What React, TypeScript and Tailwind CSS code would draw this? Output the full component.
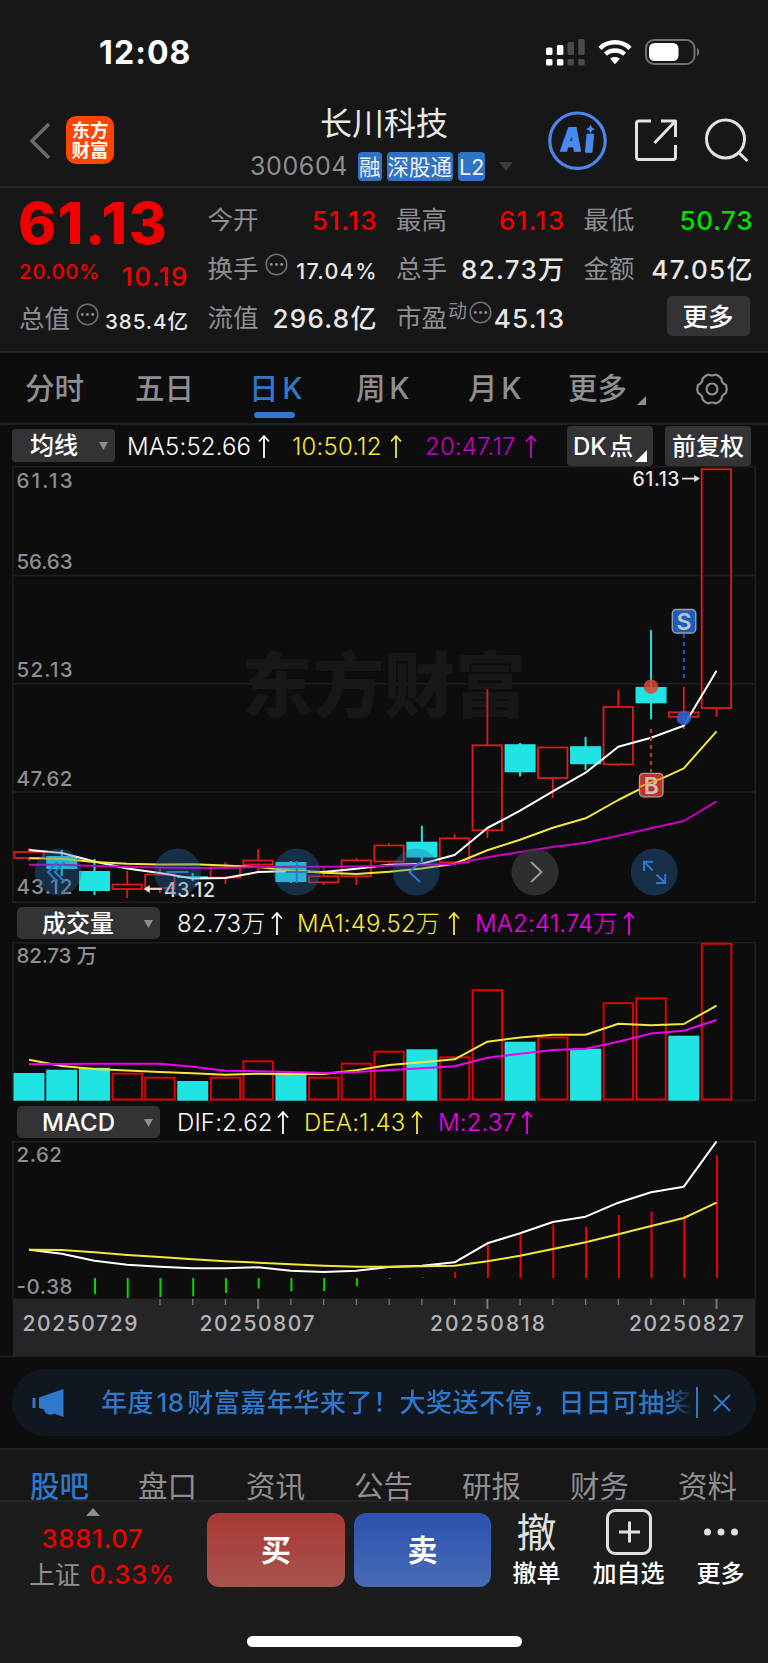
import type { ReactNode } from 'react';

type Candle = { up: boolean; high: number; low: number; top: number; bottom: number };

const STEP = 32.74;
const xAt = (i: number) => 29 + i * STEP;

const c = (up: boolean, high: number, top: number, bottom: number, low: number): Candle => ({ up, high, top, bottom, low });

const candles: Candle[] = [
  c(true, 848, 852, 858, 861),
  c(false, 850, 856, 869, 876),
  c(false, 859, 871, 891, 895),
  c(true, 871, 884.5, 889, 898),
  c(true, 868, 874.5, 888, 893),
  c(false, 873, 876.3, 878, 881),
  c(true, 862, 867.5, 877.5, 884),
  c(true, 849, 860.5, 864.5, 873),
  c(false, 861, 862, 882, 883),
  c(true, 868, 876.3, 882.3, 885),
  c(true, 858, 860.3, 876.3, 885),
  c(true, 843, 845.5, 861.5, 863),
  c(false, 825.7, 841.7, 857.5, 862),
  c(true, 834, 838.3, 862.3, 863),
  c(true, 689.3, 745.3, 830.3, 838),
  c(false, 743, 744.2, 772.3, 776.3),
  c(true, 747, 747.5, 778, 798),
  c(false, 737, 746.2, 764.2, 770),
  c(true, 689.7, 707, 764.3, 765.7),
  c(false, 630, 687, 703.3, 719.3),
  c(true, 687, 712.3, 716.8, 729.3),
  c(true, 469, 469.3, 708, 716.7),
];

const ma5 = [850, 853, 861.5, 868.5, 873, 878.5, 878, 872, 871, 872, 868.7, 864.7, 863.7, 855, 828, 810.7, 791.3, 772.7, 746.7, 737.7, 725.7, 670.7];
const ma10 = [858.3, 858.7, 862, 863.7, 864.5, 864.3, 865.5, 867, 870.5, 872.7, 874, 871.8, 868.5, 863.7, 850.3, 839.7, 827.7, 818.3, 800, 783.3, 768.3, 731.3];
const ma20 = [864.7, 864.7, 866, 866.7, 867.5, 868, 868, 867, 866.7, 866.7, 866.5, 865.7, 864.7, 864, 857.3, 852, 847, 842.7, 835.7, 828.3, 821, 801.3];

const volumes = [1073, 1069.7, 1067.7, 1073.7, 1077.7, 1081, 1077.7, 1061.3, 1074, 1077.7, 1063.7, 1051.7, 1049.3, 1057.3, 990.2, 1041.7, 1037.5, 1048.7, 1003.2, 998.3, 1035.7, 943.7];
const volDown = [0, 1, 2, 5, 8, 12, 15, 17, 20];
const volMa1 = [1059.7, 1066, 1069, 1070.5, 1072, 1073.3, 1074.7, 1073.7, 1074, 1074, 1070.3, 1065, 1062.3, 1059.3, 1041.7, 1037.5, 1034.7, 1034.7, 1023.7, 1025.3, 1024, 1005.7];
const volMa2 = [1064.3, 1064, 1063.7, 1063.7, 1063.7, 1066.7, 1070.7, 1071.3, 1072, 1073, 1072, 1070, 1068.3, 1066.3, 1057.7, 1053.7, 1050, 1048.7, 1041.7, 1033.5, 1030.7, 1020];

const dif = [1249.7, 1253.7, 1260.7, 1264.7, 1266.7, 1268.3, 1268.3, 1267.3, 1270.7, 1272, 1270.7, 1267, 1265.7, 1262.3, 1243.3, 1233.3, 1222, 1216.7, 1202.7, 1192.3, 1186.7, 1141.3];
const dea = [1249.7, 1250, 1252.3, 1255, 1257, 1259.3, 1261.3, 1262.7, 1264.3, 1265.7, 1266.7, 1266.8, 1266.3, 1265.7, 1261.3, 1255.7, 1249, 1242.3, 1234.3, 1226, 1218, 1202.7];
const macd = [1278, 1281, 1294, 1298, 1297, 1296.3, 1293, 1288.3, 1291.3, 1291, 1286, 1278.6, 1277, 1271.7, 1244.3, 1234.3, 1224.7, 1226.7, 1215.3, 1211.3, 1215.7, 1155];

const points = (ys: number[]) => ys.map((y, i) => `${xAt(i)},${y}`).join(' ');

function Line({ ys, color }: { ys: number[]; color: string }) {
  return <polyline points={points(ys)} fill="none" stroke={color} strokeWidth="2" strokeLinejoin="round" />;
}

function StatusBar() {
  return (
    <div className="flex h-[104px] items-center justify-between pl-[99px] pr-[67px]">
      <span className="pt-[2px] text-[32px] font-bold leading-none tracking-[1.1px]">12:08</span>
      <div className="flex items-center gap-[12px]">
        <svg width="41" height="27" viewBox="0 0 41 27">
          <g fill="#fff">
            <rect x="0" y="8.500" width="6.5" height="7.5" rx="1.5" />
            <rect x="10.9" y="6" width="6.5" height="10" rx="1.5" />
            <rect x="0" y="20" width="6.5" height="6.5" rx="1.5" />
            <rect x="10.9" y="20" width="6.5" height="6.5" rx="1.5" />
          </g>
          <g fill="#4a4a4a">
            <rect x="21.500" y="3" width="6.5" height="13" rx="1.5" />
            <rect x="32.200" y="0" width="6.5" height="16" rx="1.5" />
            <rect x="21.500" y="20" width="6.5" height="6.5" rx="1.5" />
            <rect x="32.200" y="20" width="6.5" height="6.5" rx="1.5" />
          </g>
        </svg>
        <svg className="-ml-[1px] mr-[1px]" width="34" height="26" viewBox="0 0 35 26" fill="none" stroke="#fff" strokeWidth="4.600">
          <path d="M2 9.300C10.500 1 24.500 1 33 9.300" />
          <path d="M7.600 15.300C13 10.300 22 10.300 27.400 15.300" />
          <path d="M17.500 25.500L12.500 20C15 17.400 20 17.400 22.500 20Z" fill="#fff" stroke="none" />
        </svg>
        <svg width="56" height="26" viewBox="0 0 56 26">
          <rect x="1" y="1" width="48.500" height="24" rx="8" fill="none" stroke="#727272" strokeWidth="2" />
          <rect x="4" y="4" width="29.500" height="18" rx="5.500" fill="#fff" />
          <path d="M52 9c3 1 3 7 0 8z" fill="#727272" />
        </svg>
      </div>
    </div>
  );
}

function Tag({ children }: { children: ReactNode }) {
  return <span className="flex h-[29px] items-center whitespace-nowrap rounded-[4px] bg-[#2f73c4] px-[1px] pt-[1px] text-[21.500px] text-[#f0f0f0]">{children}</span>;
}

function Header() {
  return (
    <div className="grid h-[84px] grid-cols-[1fr_270px_1fr] border-b-2 border-[#262628]">
      <div className="flex items-start pl-[29px] pt-[12px]">
        <svg width="22" height="48" viewBox="0 0 22 48" fill="none" stroke="#6a6a6c" strokeWidth="3.500">
          <path d="M20 8L3 25L20 42" />
        </svg>
        <div className="ml-[15px] flex h-[48px] w-[48px] flex-col items-center justify-center rounded-[10px] bg-[#ff4500] text-[18.500px] font-bold leading-[20px]">
          <span>东方</span>
          <span>财富</span>
        </div>
      </div>
      <div className="flex flex-col items-center">
        <h1 className="text-[32px] leading-[40px] text-[#e8e8e8]">长川科技</h1>
        <div className="mt-[8px] flex items-center gap-[5px] self-start pl-[1px]">
          <span className="mr-[5px] text-[25px] leading-none tracking-[0.600px] text-[#8e8e93]">300604</span>
          <Tag>融</Tag>
          <Tag>深股通</Tag>
          <Tag>L2</Tag>
          <svg className="ml-[9px]" width="14" height="9" viewBox="0 0 14 9">
            <path d="M0 0H14L7 9Z" fill="#3c3c3e" />
          </svg>
        </div>
      </div>
      <div className="flex items-start justify-end pr-[19px] pt-[6px]">
        <svg width="60" height="60" viewBox="0 0 60 60">
          <circle cx="29.500" cy="30.700" r="27.700" fill="none" stroke="#4a86ee" strokeWidth="3.200" />
          <g fill="#4a8af0" stroke="#4a8af0" strokeWidth="1.500" strokeLinejoin="round" fontSize="32" fontWeight="900" transform="skewX(-5)">
            <text x="15.500" y="41" textLength="21" lengthAdjust="spacingAndGlyphs">A</text>
            <text x="40" y="42.500" textLength="9" lengthAdjust="spacingAndGlyphs">ı</text>
          </g>
          <path d="M42.500 14.500L44 17.500L47 19L44 20.500L42.500 23.500L41 20.500L38 19L41 17.500Z" fill="#4a8af0" />
        </svg>
        <svg className="ml-[26px] mt-[8px]" width="44" height="44" viewBox="0 0 44 44" fill="none" stroke="#e2e2e2" strokeWidth="3" strokeLinejoin="round">
          <path d="M17 3H5Q2.500 3 2.500 5.500V39Q2.500 41.500 5 41.500H39Q41.500 41.500 41.500 39V27" />
          <path d="M27 3H41.500V19M41.500 3L20.500 25" />
        </svg>
        <svg className="ml-[26px] mt-[8px]" width="45" height="46" viewBox="0 0 45 46" fill="none" stroke="#e2e2e2" strokeWidth="3">
          <circle cx="21.500" cy="21" r="19" />
          <path d="M34.500 34.500L43.500 43" />
        </svg>
      </div>
    </div>
  );
}

function Dots() {
  return (
    <svg className="shrink-0" width="23" height="23" viewBox="0 0 23 23">
      <circle cx="11.500" cy="11.500" r="10.300" fill="none" stroke="#6e6e72" strokeWidth="1.600" />
      <g fill="#8e8e93">
        <circle cx="6.300" cy="11.500" r="1.400" />
        <circle cx="11.500" cy="11.500" r="1.400" />
        <circle cx="16.700" cy="11.500" r="1.400" />
      </g>
    </svg>
  );
}

function Stat({ label, mark, value, tone = 'text-[#e8e8e8]', size = 'text-[26px] tracking-[1.300px] -mr-[1.300px]' }: { label: string; mark?: ReactNode; value: string; tone?: string; size?: string }) {
  return (
    <div className="flex h-[49px] items-center justify-between whitespace-nowrap">
      <div className="flex items-center text-[25.500px] text-[#8e8e93]">
        {label}
        {mark}
      </div>
      <span className={`${size} ${tone} font-medium`}>{value}</span>
    </div>
  );
}

function Quote() {
  return (
    <div className="grid h-[165px] grid-cols-[169px_169px_168px_169px] gap-x-[19.500px] border-b-2 border-[#262628] pl-[19px] pt-[8px]">
      <div>
        <div className="-ml-[1px] flex h-[54px] items-center text-[58px] font-extrabold leading-none tracking-[1.500px] text-[#f00000]">61.13</div>
        <div className="flex h-[44px] items-center justify-between font-medium text-[#f00000]">
          <span className="text-[20.500px] tracking-[0.500px]">20.00%</span>
          <span className="-mr-[1px] pt-[8px] text-[26px] tracking-[1.500px]">10.19</span>
        </div>
        <div className="flex h-[50px] items-center justify-between">
          <div className="flex items-center gap-[6px] text-[25.500px] text-[#8e8e93]">
            总值
            <span className="mb-[10px]"><Dots /></span>
          </div>
          <span className="-mr-[1px] pt-[6px] text-[20.500px] font-medium tracking-[1px] text-[#e8e8e8]">385.4亿</span>
        </div>
      </div>
      <div>
        <Stat label="今开" value="51.13" tone="text-[#f00000]" />
        <Stat label="换手" mark={<span className="mb-[10px] ml-[6px]"><Dots /></span>} value="17.04%" size="pt-[4px] text-[21.500px] tracking-[1.300px] -mr-[1.300px]" />
        <Stat label="流值" value="296.8亿" />
      </div>
      <div>
        <Stat label="最高" value="61.13" tone="text-[#f00000]" />
        <Stat label="总手" value="82.73万" />
        <Stat
          label="市盈"
          mark={
            <span className="mb-[12px] ml-[1px] flex items-center gap-[2px] text-[19px]">
              动<Dots />
            </span>
          }
          value="45.13"
        />
      </div>
      <div>
        <Stat label="最低" value="50.73" tone="text-[#00e000]" size="text-[26px] tracking-[0.700px] -mr-[0.700px]" />
        <Stat label="金额" value="47.05亿" />
        <div className="flex h-[44px] items-center justify-end pr-[3px]">
          <button className="h-[40px] w-[83px] rounded-[5px] bg-[#333335] pt-[1px] text-[25.500px] font-medium leading-none">更多</button>
        </div>
      </div>
    </div>
  );
}

function PeriodTabs() {
  return (
    <div className="flex h-[72px] items-center border-b-2 border-[#1f1f21] pt-[2px] text-[29.500px] font-medium leading-none text-[#8e8e93] [word-spacing:-4px]">
      <span className="ml-[25px] w-[110px]">分时</span>
      <span className="w-[114px]">五日</span>
      <span className="relative w-[107px] text-[#2f78cc]">
        日 K
        <i className="absolute left-[5px] top-[38px] h-[6px] w-[41px] rounded-full bg-[#2f78cc]" />
      </span>
      <span className="w-[112px]">周 K</span>
      <span className="w-[100px]">月 K</span>
      <span>更多</span>
      <svg className="ml-[10px] mt-[22px]" width="9" height="9" viewBox="0 0 9 9">
        <path d="M9 0V9H0Z" fill="#8e8e93" />
      </svg>
      <svg className="ml-[49px]" width="34" height="34" viewBox="0 0 34 34" fill="none" stroke="#8e8e93" strokeWidth="2.200" strokeLinejoin="round">
        <path d="M13.500 2.500Q17 4.500 20.500 2.500Q25 4 26.500 7Q26.500 11 31 13Q32.500 17 31 21Q26.500 23 26.500 27Q25 30 20.500 31.500Q17 29.500 13.500 31.500Q9 30 7.500 27Q7.500 23 3 21Q1.500 17 3 13Q7.500 11 7.500 7Q9 4 13.500 2.500Z" />
        <circle cx="17" cy="17" r="5.500" />
      </svg>
    </div>
  );
}

function Indicator({ text, tone, width }: { text: string; tone: string; width: string }) {
  return (
    <span className={`flex shrink-0 items-center justify-between whitespace-nowrap pt-[2px] text-[24px] font-light leading-none tracking-[0.150px] ${tone} ${width}`}>
      {text}
      <svg className="-mt-[2px]" width="12" height="24" viewBox="0 0 12 24" fill="none" stroke="currentColor" strokeWidth="1.800">
        <path d="M6 24V2M1 7.500L6 2L11 7.500" />
      </svg>
    </span>
  );
}

function Caret() {
  return (
    <svg width="9" height="8" viewBox="0 0 9 8">
      <path d="M0 0H9L4.500 8Z" fill="#8e8e93" />
    </svg>
  );
}

function MaRow() {
  return (
    <div className="flex h-[41px] items-center pl-[12px]">
      <button className="flex h-[33px] w-[103px] items-center justify-between rounded-[4px] bg-[#333335] pl-[18px] pr-[7px] pt-[1px] text-[24px] font-medium leading-none">
        均线
        <Caret />
      </button>
      <span className="w-[12px]" />
      <Indicator text="MA5:52.66" tone="text-white" width="w-[143px]" />
      <span className="w-[22px]" />
      <Indicator text="10:50.12" tone="text-[#f5e63c]" width="w-[110px]" />
      <span className="w-[23px]" />
      <Indicator text="20:47.17" tone="text-[#c800c8]" width="w-[112px]" />
      <button className="relative ml-[30px] h-[40px] w-[86px] rounded-[4px] bg-[#333335] pl-[6px] pt-[2px] text-left text-[24px] font-medium leading-none [word-spacing:-4px]">
        DK 点
        <svg className="absolute bottom-[4px] right-[6px]" width="12" height="12" viewBox="0 0 12 12">
          <path d="M12 0V12H0Z" fill="#fff" />
        </svg>
      </button>
      <button className="ml-[12px] h-[40px] w-[86px] rounded-[4px] bg-[#333335] pt-[2px] text-[24px] font-medium leading-none">前复权</button>
    </div>
  );
}

const gridLabels: [string, number][] = [
  ['61.13', 488],
  ['56.63', 569],
  ['52.13', 677],
  ['47.62', 786],
  ['43.12', 894],
];

function RoundButton({ cx, muted, children }: { cx: number; muted?: boolean; children: ReactNode }) {
  return (
    <g fill="none" stroke={muted ? '#9a9a9e' : '#2f78d0'} strokeWidth="2">
      <circle cx={cx} cy="872" r="23.500" fill={muted ? '#3a3a3c' : '#2a69b0'} fillOpacity={muted ? 0.75 : 0.36} stroke="none" />
      {children}
    </g>
  );
}

function PriceChart() {
  return (
    <svg className="block" width="768" height="437" viewBox="0 466 768 437">
      <g stroke="#1f1f21" strokeWidth="1.500">
        <path d="M12.800 466.700H755.300V902.300H12.800Z" fill="none" />
        <path d="M12.800 575.700H755.300M12.800 683.700H755.300M12.800 792H755.300" />
      </g>
      <text x="242" y="711" fontSize="71" fontWeight="900" fill="#171717">东方财富</text>
      {gridLabels.map(([label, y]) => (
        <text key={label} x="16.500" y={y} fontSize="20.500" fontWeight="500" fill="#8e8e93" textLength="56">{label}</text>
      ))}
      {candles.map((k, i) =>
        k.up ? (
          <g key={i} stroke="#e01a1a" strokeWidth="1.800" fill="none">
            <path d={`M${xAt(i)} ${k.high}V${k.top}M${xAt(i)} ${k.bottom}V${k.low}`} />
            <rect x={xAt(i) - 14.8} y={k.top} width="29.400" height={k.bottom - k.top} />
          </g>
        ) : (
          <g key={i} fill="#20e3e3">
            <rect x={xAt(i) - 1} y={k.high} width="2" height={k.low - k.high} />
            <rect x={xAt(i) - 15.5} y={k.top} width="31" height={k.bottom - k.top} />
          </g>
        ),
      )}
      <Line ys={ma5} color="#ffffff" />
      <Line ys={ma10} color="#f5e63c" />
      <Line ys={ma20} color="#c800c8" />

      <path d="M683.800 634V680" stroke="#1f5fc4" strokeWidth="2" strokeDasharray="4 4" />
      <path d="M651 729V772" stroke="#c0392b" strokeWidth="2" strokeDasharray="4 4" />
      <circle cx="651" cy="686.700" r="7.200" fill="#d9452f" fillOpacity="0.850" />
      <circle cx="683.800" cy="718" r="7.200" fill="#2b63d0" fillOpacity="0.900" />
      <rect x="672.300" y="609.500" width="23.500" height="23.500" rx="4" fill="#1a5cc0" stroke="#a0a0a4" strokeWidth="1.300" />
      <rect x="639.500" y="773.300" width="23.500" height="23.500" rx="4" fill="#c03325" stroke="#b0a0a0" strokeWidth="1.300" />
      <g fontSize="23" fontWeight="600" textAnchor="middle" fill="#c4c4c6">
        <text x="684" y="629.700">S</text>
        <text x="651.300" y="793.500">B</text>
      </g>
      <path d="M639.500 786.900L663 777.800" stroke="#f5a63c" strokeWidth="1.800" />

      <g fill="#e4e4e4" fontSize="19.500" fontWeight="500">
        <text x="632.500" y="485.700" textLength="47">61.13</text>
        <text x="164" y="897" textLength="51">43.12</text>
      </g>
      <g stroke="#e4e4e4" strokeWidth="1.800" fill="#e4e4e4">
        <path d="M682 478.600H696" />
        <path d="M694.500 475.500L699.500 478.600L694.500 481.700Z" strokeWidth="0.500" />
        <path d="M162 889H148" />
        <path d="M149.500 885.500L144 889L149.500 892.500Z" strokeWidth="0.500" />
      </g>

      <RoundButton cx={58.3}>
        <path d="M57.500 862L48 872L57.500 882M64.500 862L55 872L64.500 882" />
      </RoundButton>
      <RoundButton cx={177.5}>
        <path d="M166.300 872H188.500" />
      </RoundButton>
      <RoundButton cx={296.8}>
        <path d="M285.700 872H307.900M296.800 861V883" />
      </RoundButton>
      <RoundButton cx={416.2}>
        <path d="M420 862L409.500 872L420 882" />
      </RoundButton>
      <RoundButton cx={535} muted>
        <path d="M531 862L541.500 872L531 882" />
      </RoundButton>
      <RoundButton cx={654.3}>
        <path d="M653 861.800H644V871M644 861.800L652.500 870.300M656 883H665.200V874M665.200 883L656.500 874.500" />
      </RoundButton>
    </svg>
  );
}

function SubRow({ name, children }: { name: string; children: ReactNode }) {
  return (
    <div className="flex h-[39px] items-center pl-[17px]">
      <button className="mr-[17px] flex h-[32px] w-[143px] shrink-0 items-center justify-between rounded-[5px] bg-[#333335] pl-[25px] pr-[7px] pt-[2px] text-[24px] font-medium leading-none">
        {name}
        <Caret />
      </button>
      {children}
    </div>
  );
}

function VolumeChart() {
  return (
    <svg className="block" width="768" height="160" viewBox="0 942 768 160">
      <path d="M12.800 942.700H755.300V1100.500H12.800Z" fill="none" stroke="#1f1f21" strokeWidth="1.500" />
      <text x="16.500" y="962.500" fontSize="20.500" fontWeight="500" fill="#8e8e93" textLength="80.500">82.73 万</text>
      {volumes.map((y, i) =>
        volDown.includes(i) ? (
          <rect key={i} x={xAt(i) - 15.5} y={y} width="31" height={1100.7 - y} fill="#20e3e3" />
        ) : (
          <rect key={i} x={xAt(i) - 14.7} y={y} width="29.400" height={1099.5 - y} fill="none" stroke="#e80000" strokeWidth="1.900" />
        ),
      )}
      <Line ys={volMa1} color="#f5e63c" />
      <Line ys={volMa2} color="#f000f0" />
    </svg>
  );
}

const dates: [string, number][] = [
  ['20250729', 22.5],
  ['20250807', 199.5],
  ['20250818', 430],
  ['20250827', 629],
];

function MacdChart() {
  return (
    <svg className="block" width="768" height="216" viewBox="0 1141 768 216">
      <path d="M12.800 1141.700H755.300V1299H12.800Z" fill="none" stroke="#1f1f21" strokeWidth="1.500" />
      {macd.map((y, i) => (
        <path key={i} d={`M${xAt(i) + 0.5} 1278V${y}`} stroke={y > 1278 ? '#00d800' : '#f00000'} strokeWidth="2" />
      ))}
      <text x="16.500" y="1161.500" fontSize="20.500" fontWeight="500" fill="#8e8e93" textLength="45.500">2.62</text>
      <text x="16.500" y="1294.300" fontSize="20.500" fontWeight="500" fill="#8e8e93" textLength="56">-0.38</text>
      <Line ys={dif} color="#ffffff" />
      <Line ys={dea} color="#f5e63c" />
      <rect x="13" y="1299" width="742.500" height="57" fill="#252527" />
      {candles.map((_, i) =>
        i < 4 ? null : <path key={i} d={`M${xAt(i)} 1299V${i % 7 === 0 ? 1309 : 1305}`} stroke="#77777a" strokeWidth={i % 7 === 0 ? 2 : 1.3} />,
      )}
      {dates.map(([d, x]) => (
        <text key={d} x={x} y="1330.700" fontSize="21" fontWeight="500" fill="#b4b4b8" textLength="115">{d}</text>
      ))}
      <path d="M0 1356.300H768" stroke="#1f1f21" strokeWidth="1.500" />
    </svg>
  );
}

function Notice() {
  return (
    <div className="flex h-[91px] items-center px-[12px]">
      <div className="flex h-[67px] w-full items-center rounded-full bg-[#10171f] pl-[20px] text-[#2f78cc]">
        <svg width="33" height="28" viewBox="0 0 33 28" fill="currentColor">
          <path d="M0.500 9H3.500V19H0.500ZM7 8.500L31.500 0V28L22 24.500Q19 27 14.500 24.500Q12 23 12 20.500L7 19Z" />
        </svg>
        <div className="ml-[36px] w-[592px] whitespace-nowrap bg-linear-to-r from-[#2f78cc] from-96% to-[#10171f] bg-clip-text text-[26px] font-medium tracking-[0.530px] text-transparent [word-spacing:-5px]">
          年度 18 财富嘉年华来了！大奖送不停，日日可抽奖
        </div>
        <span className="ml-[3px] h-[31px] w-[2px] bg-[#2f78cc]" />
        <svg className="ml-[15px]" width="18" height="18" viewBox="0 0 18 18" stroke="currentColor" strokeWidth="2">
          <path d="M1 1L17 17M17 1L1 17" />
        </svg>
      </div>
    </div>
  );
}

const sections = ['股吧', '盘口', '资讯', '公告', '研报', '财务', '资料'];

function SectionTabs() {
  return (
    <div className="flex h-[52px] items-end justify-between border-t-2 border-[#1f1f21] bg-[#171717] pl-[30px] pr-[31px] text-[29.500px] leading-[28px] text-[#8e8e93]">
      {sections.map((s, i) => (
        <span key={s} className={i === 0 ? 'font-medium text-[#2f78cc]' : ''}>{s}</span>
      ))}
    </div>
  );
}

function BottomBar() {
  return (
    <div className="h-[163px] border-t-2 border-[#262628] bg-[#1c1c1c]">
      <div className="flex h-[89px]">
        <div className="flex w-[207px] flex-col items-center pr-[22px] pt-[6px]">
          <svg className="shrink-0" width="14" height="8" viewBox="0 0 14 8">
            <path d="M7 0L14 8H0Z" fill="#8e8e93" />
          </svg>
          <span className="mt-[6px] text-[25.500px] font-medium leading-[34px] tracking-[0.800px] text-[#f00000]">3881.07</span>
          <span className="mt-[2px] flex gap-[9px] whitespace-nowrap pl-[19px] text-[25.500px] leading-[34px] text-[#8e8e93]">
            上证 <span className="font-medium tracking-[1.100px] text-[#f00000]">0.33%</span>
          </span>
        </div>
        <button className="mt-[11px] h-[74px] w-[138px] rounded-[12px] bg-linear-to-b from-[#a83833] to-[#a8534e] text-[30px] font-bold">买</button>
        <button className="ml-[9px] mt-[11px] h-[74px] w-[137px] rounded-[12px] bg-linear-to-b from-[#2a52ae] to-[#4a6bb6] text-[30px] font-bold">卖</button>
        <div className="flex w-[91px] flex-col items-center">
          <span className="mt-[8px] h-[47px] text-[40px] leading-[45px] text-[#e0e0e0]">撤</span>
          <span className="text-[24px] font-medium leading-[34px]">撤单</span>
        </div>
        <div className="flex w-[93px] flex-col items-center">
          <svg className="mb-[8px] mt-[7px] block shrink-0" width="46" height="46" viewBox="0 0 46 46" fill="none" stroke="#e0e0e0" strokeWidth="3">
            <rect x="1.500" y="1.500" width="43" height="43" rx="7.500" />
            <path d="M13 23H34M23.500 12.500V33.500" />
          </svg>
          <span className="-mt-[6px] text-[24px] font-medium leading-[34px]">加自选</span>
        </div>
        <div className="flex w-[91px] flex-col items-center">
          <svg className="mb-[21px] mt-[26px] shrink-0" width="36" height="8" viewBox="0 0 36 8" fill="#e0e0e0">
            <circle cx="4.500" cy="4" r="3.500" />
            <circle cx="18" cy="4" r="3.500" />
            <circle cx="31.500" cy="4" r="3.500" />
          </svg>
          <span className="text-[24px] font-medium leading-[34px]">更多</span>
        </div>
      </div>
      <div className="mx-auto mt-[45px] h-[11px] w-[275px] rounded-full bg-white" />
    </div>
  );
}

export default function App() {
  return (
    <div className="h-[1663px] w-[768px] overflow-hidden bg-[#0d0d0d] font-[Inter,'Noto_Sans_CJK_SC',sans-serif] text-white">
      <div className="bg-[#171717]">
        <StatusBar />
        <Header />
        <Quote />
      </div>
      <PeriodTabs />
      <MaRow />
      <PriceChart />
      <SubRow name="成交量">
        <Indicator text="82.73万" tone="text-white" width="w-[106px]" />
        <span className="w-[14px]" />
        <Indicator text="MA1:49.52万" tone="text-[#f5e63c]" width="w-[163px]" />
        <span className="w-[15px]" />
        <Indicator text="MA2:41.74万" tone="text-[#f000f0]" width="w-[160px]" />
      </SubRow>
      <VolumeChart />
      <SubRow name="MACD">
        <Indicator text="DIF:2.62" tone="text-white" width="w-[112px]" />
        <span className="w-[15px]" />
        <Indicator text="DEA:1.43" tone="text-[#f5e63c]" width="w-[119px]" />
        <span className="w-[15px]" />
        <Indicator text="M:2.37" tone="text-[#f000f0]" width="w-[95px]" />
      </SubRow>
      <MacdChart />
      <Notice />
      <SectionTabs />
      <BottomBar />
    </div>
  );
}
